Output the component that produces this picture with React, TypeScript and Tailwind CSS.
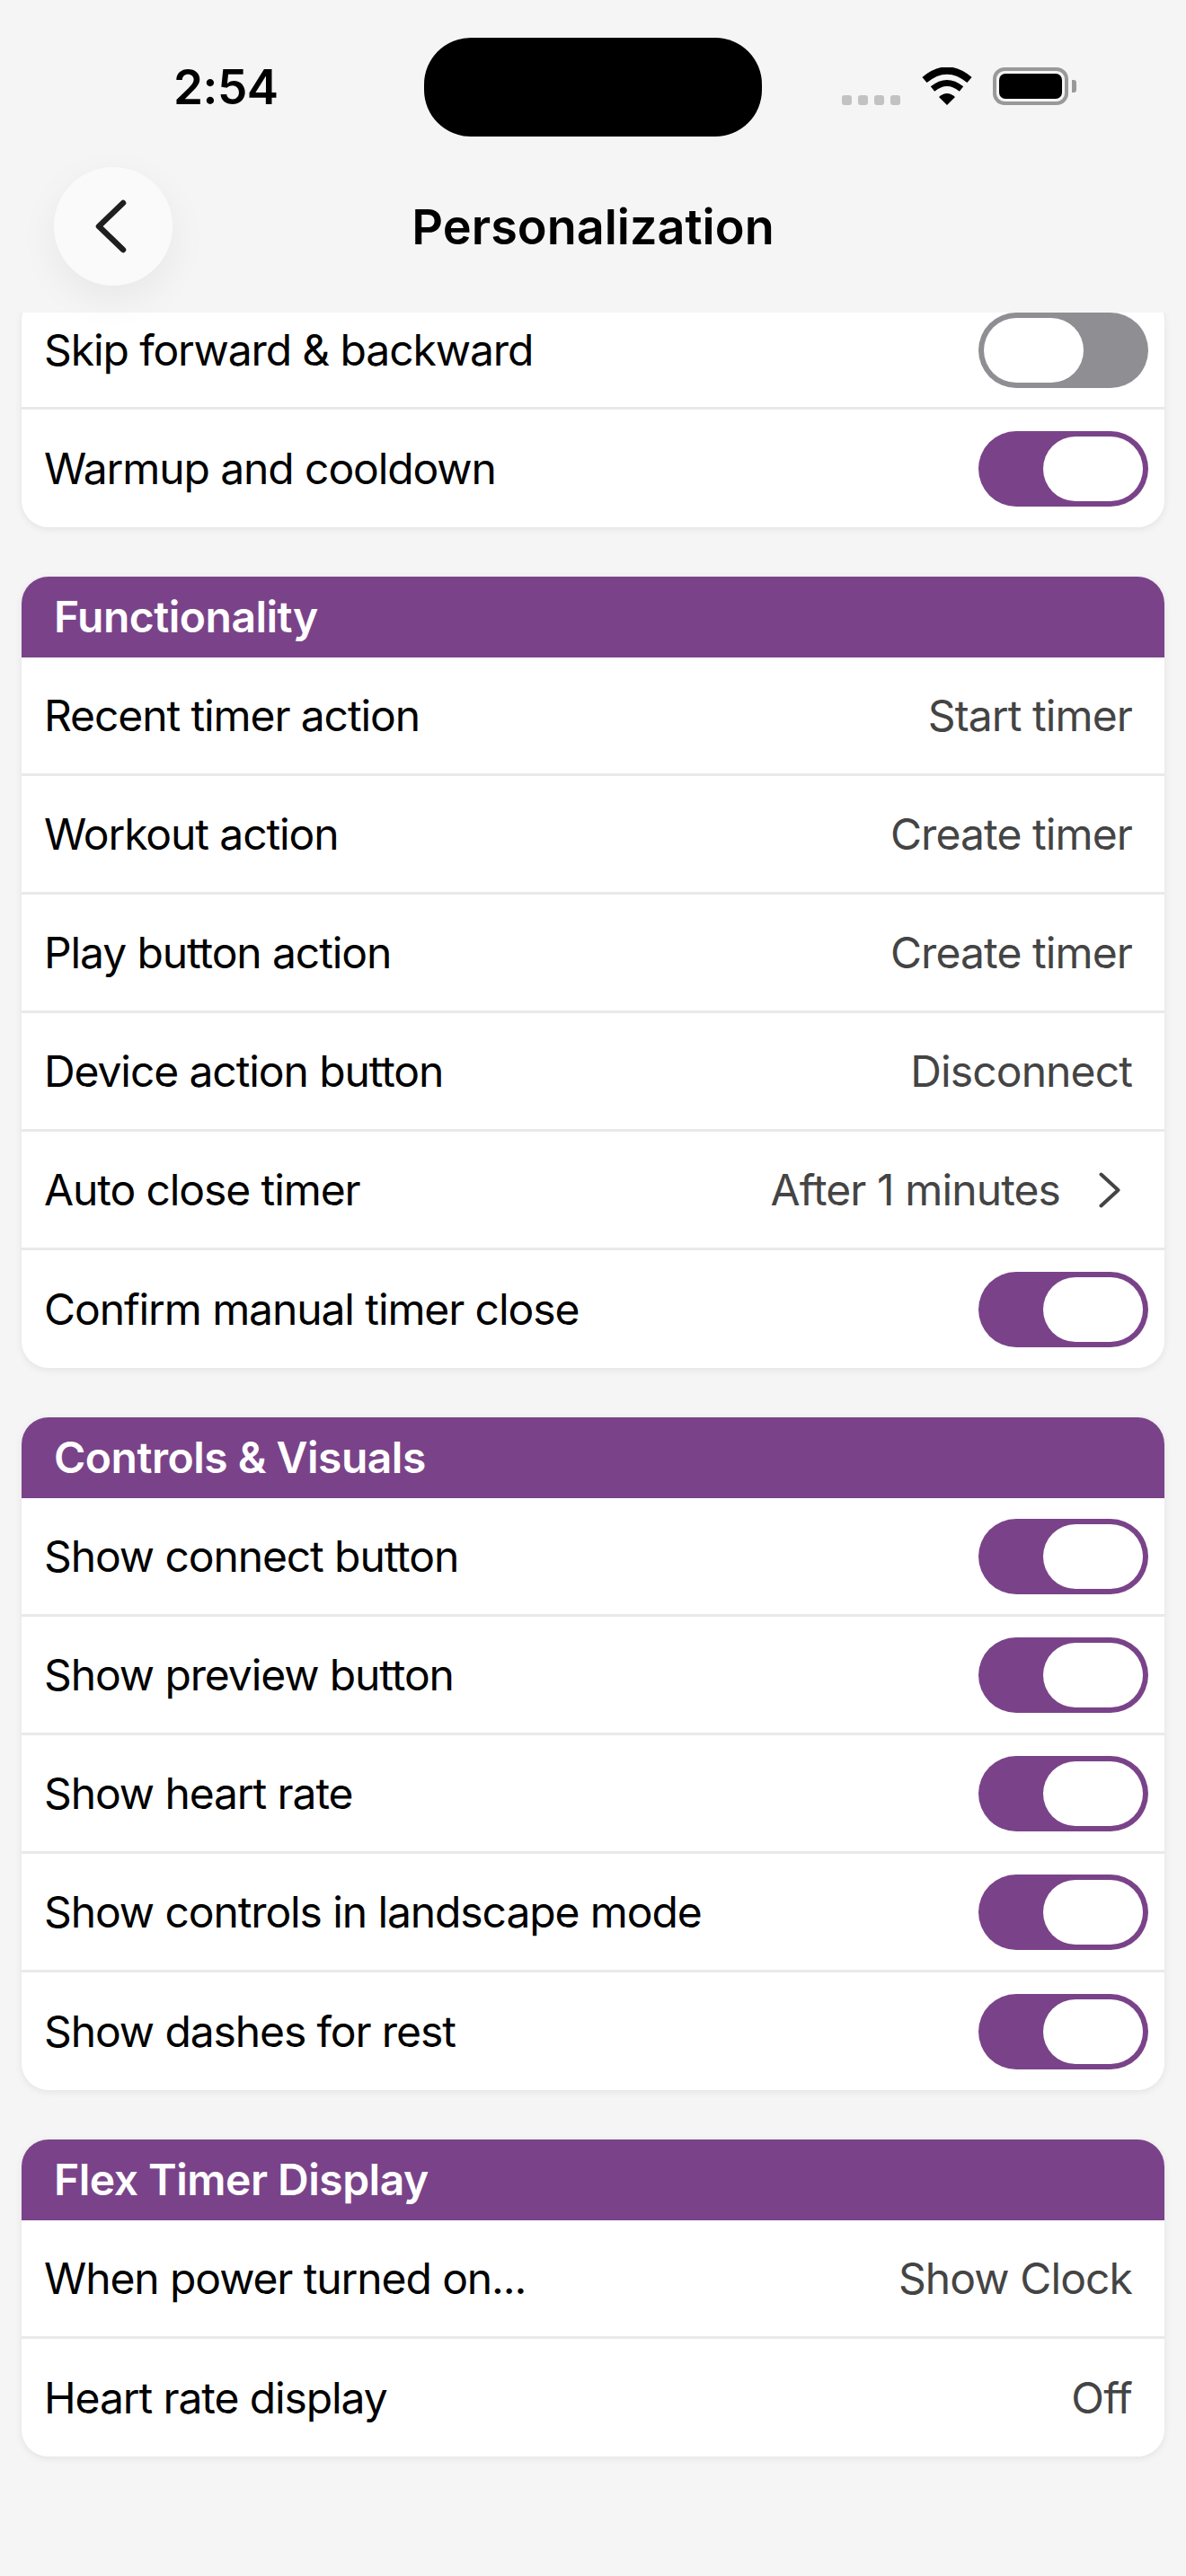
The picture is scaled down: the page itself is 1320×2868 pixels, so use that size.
import React from 'react';

type Row = { label: string; value?: string; chevron?: boolean; toggle?: 'on' | 'off' };

const sections: { title: string; rows: Row[] }[] = [
  {
    title: 'Functionality',
    rows: [
      { label: 'Recent timer action', value: 'Start timer' },
      { label: 'Workout action', value: 'Create timer' },
      { label: 'Play button action', value: 'Create timer' },
      { label: 'Device action button', value: 'Disconnect' },
      { label: 'Auto close timer', value: 'After 1 minutes', chevron: true },
      { label: 'Confirm manual timer close', toggle: 'on' },
    ],
  },
  {
    title: 'Controls & Visuals',
    rows: [
      { label: 'Show connect button', toggle: 'on' },
      { label: 'Show preview button', toggle: 'on' },
      { label: 'Show heart rate', toggle: 'on' },
      { label: 'Show controls in landscape mode', toggle: 'on' },
      { label: 'Show dashes for rest', toggle: 'on' },
    ],
  },
  {
    title: 'Flex Timer Display',
    rows: [
      { label: 'When power turned on...', value: 'Show Clock' },
      { label: 'Heart rate display', value: 'Off' },
    ],
  },
];

const Toggle = ({ on }: { on: boolean }) => (
  <div className={`flex h-[84px] w-[189px] rounded-full p-[6px] ${on ? 'justify-end bg-[#7a4389]' : 'justify-start bg-[#8e8e93]'}`}>
    <div className="h-[72px] w-[111px] rounded-full bg-white" />
  </div>
);

const SettingRow = ({ row }: { row: Row }) => (
  <div className="flex h-[132px] items-center justify-between border-b-[3px] border-[#e9e9e9] pl-[25px] last:h-[131px] last:border-b-0">
    <span className="text-[48px] leading-none tracking-[-1.1px] text-black">{row.label}</span>
    {row.toggle && (
      <div className="pr-[18px]">
        <Toggle on={row.toggle === 'on'} />
      </div>
    )}
    {row.value && !row.chevron && (
      <span className="pr-[36px] text-[48px] leading-none tracking-[-0.9px] text-[#444444]">{row.value}</span>
    )}
    {row.chevron && (
      <div className="flex items-center gap-[43px] pr-[49px]">
        <span className="text-[48px] leading-none tracking-[-0.9px] text-[#444444]">{row.value}</span>
        <svg width="24" height="40" viewBox="0 0 24 40" fill="none" stroke="#444444" strokeWidth="4" strokeLinecap="round" strokeLinejoin="round">
          <path d="M2.5 2.5 L21.5 20 L2.5 37.5" />
        </svg>
      </div>
    )}
  </div>
);

const Section = ({ title, rows }: { title: string; rows: Row[] }) => (
  <div className="overflow-hidden rounded-[30px] bg-white shadow-[0_2px_8px_rgba(0,0,0,0.08)]">
    <div className="flex h-[90px] items-center bg-[#7a4389] pl-[36px] text-[48px] font-semibold leading-none tracking-[-0.5px] text-white">
      {title}
    </div>
    {rows.map((row) => (
      <SettingRow key={row.label} row={row} />
    ))}
  </div>
);

const StatusBar = () => (
  <div className="flex h-[152px] items-start pt-[42px]">
    <div className="flex h-[110px] w-[472px] items-center pl-[193px]">
      <span className="text-[53px] font-semibold leading-none tracking-[-0.5px] text-black">2:54</span>
    </div>
    <div className="h-[110px] w-[376px] rounded-[52px] bg-black" />
    <div className="flex items-end pl-[89px] pt-[33px]">
      <div className="flex gap-[7px]">
        {[0, 1, 2, 3].map((i) => (
          <div key={i} className="h-[11px] w-[11px] rounded-[3px] bg-[#c2c2c2]" />
        ))}
      </div>
      <svg className="ml-[23px]" width="58" height="42" viewBox="0 0 58 42" fill="none">
        <path d="M4 14 Q29 -7 54 14" stroke="black" strokeWidth="8" />
        <path d="M13 24 Q29 11 45 24" stroke="black" strokeWidth="7" />
        <path d="M20 33 Q29 25 38 33 L29 42 Z" fill="black" />
      </svg>
      <div className="ml-[22px] flex items-center">
        <div className="h-[42px] w-[84px] rounded-[13px] border-[4px] border-[#999999] p-[3px]">
          <div className="h-full w-full rounded-[7px] bg-black" />
        </div>
        <div className="ml-[4px] h-[14px] w-[5px] rounded-r-[3px] bg-[#999999]" />
      </div>
    </div>
  </div>
);

const NavBar = () => (
  <div className="mt-[34px] grid h-[132px] grid-cols-[1fr_auto_1fr] items-center px-[60px]">
    <div className="flex h-[132px] w-[132px] items-center justify-center rounded-full bg-[#fafafa] shadow-[0_14px_44px_rgba(0,0,0,0.06)]">
      <svg className="mr-[6px]" width="36" height="60" viewBox="0 0 36 60" fill="none" stroke="#1f1f1f" strokeWidth="6.5" strokeLinecap="round" strokeLinejoin="round">
        <path d="M32 4 L5 30 L32 56" />
      </svg>
    </div>
    <span className="pt-[2px] text-[54px] font-semibold leading-none text-black">Personalization</span>
    <div />
  </div>
);

export default function App() {
  return (
    <div className="flex h-[2868px] flex-col overflow-hidden bg-[#f5f5f5] font-['Inter',sans-serif]">
      <div className="relative z-10 h-[348px] shrink-0">
        <StatusBar />
        <NavBar />
      </div>
      <div className="flex-1 overflow-hidden px-[24px]">
        <div className="-mt-[21px] flex flex-col gap-[55px]">
          {/* first card is scrolled under the nav bar */}
          <div className="overflow-hidden rounded-[30px] bg-white shadow-[0_2px_8px_rgba(0,0,0,0.08)]">
            <div className="flex h-[129px] items-center justify-between border-b-[3px] border-[#e9e9e9] pl-[25px]">
              <span className="text-[48px] leading-none tracking-[-1.1px] text-black">Skip forward &amp; backward</span>
              <div className="pr-[18px]">
                <Toggle on={false} />
              </div>
            </div>
            <SettingRow row={{ label: 'Warmup and cooldown', toggle: 'on' }} />
          </div>
          {sections.map((s) => (
            <Section key={s.title} title={s.title} rows={s.rows} />
          ))}
        </div>
      </div>
    </div>
  );
}
